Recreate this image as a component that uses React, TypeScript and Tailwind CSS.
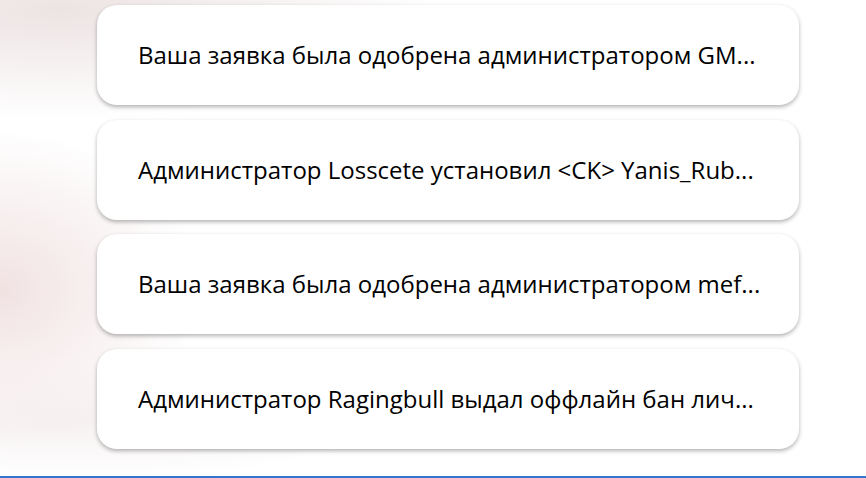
import React from 'react';

const notifications = [
  'Ваша заявка была одобрена администратором GM...',
  'Администратор Losscete установил <CK> Yanis_Rub...',
  'Ваша заявка была одобрена администратором mef...',
  'Администратор Ragingbull выдал оффлайн бан лич...',
];

const App: React.FC = () => {
  return <div className="w-[866px] h-[478px] overflow-hidden flex flex-col bg-white bg-[radial-gradient(ellipse_380px_110px_at_60px_10px,#ede3e3,transparent),radial-gradient(ellipse_200px_160px_at_0px_290px,#f1e2e2,transparent),radial-gradient(ellipse_300px_60px_at_80px_420px,#f6f1f1,transparent)]" style={{ fontFamily: '"Open Sans", "Noto Sans", sans-serif' }}>
    <div className="flex flex-col gap-[14.5px] pt-[5px] pl-[97px]">
      {notifications.map((text, i) => (
        <div key={i} className="w-[702px] h-[100px] flex items-center pl-[41px] bg-white rounded-[20px] shadow-[0_2px_4px_rgba(0,0,0,0.3)]">
          <span className="text-[24px] leading-none text-black whitespace-nowrap">{text}</span>
        </div>
      ))}
    </div>
    <div className="mt-auto h-[2px] bg-[#3274d0]" />
  </div>;
};

export default App;
